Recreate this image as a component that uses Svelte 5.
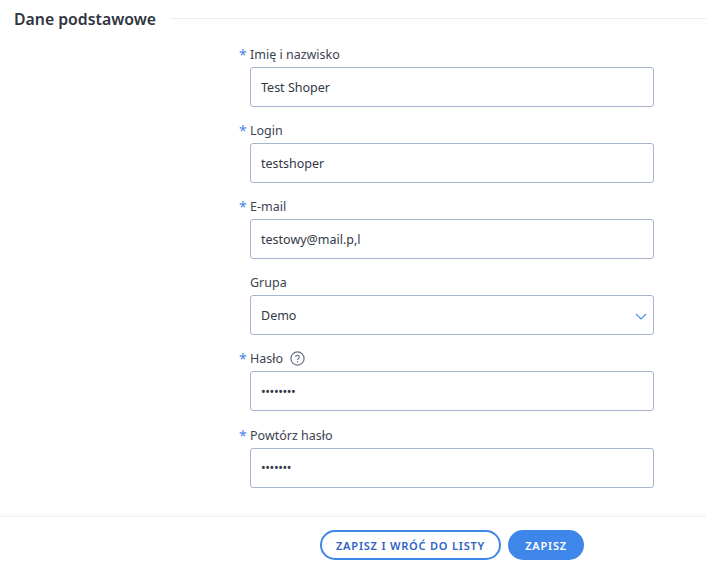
<script>
  const fields = [
    { id: 'name', label: 'Imię i nazwisko', value: 'Test Shoper', type: 'text', required: true },
    { id: 'login', label: 'Login', value: 'testshoper', type: 'text', required: true },
    { id: 'email', label: 'E-mail', value: 'testowy@mail.p,l', type: 'text', required: true },
    { id: 'group', label: 'Grupa', value: 'Demo', type: 'select' },
    { id: 'pass', label: 'Hasło', value: '........', type: 'password', required: true, help: true },
    { id: 'pass2', label: 'Powtórz hasło', value: '.......', type: 'password', required: true }
  ];
</script>

<div class="page">
  <main class="content">
    <div class="section-title">
      <h2>Dane podstawowe</h2>
      <span class="rule"></span>
    </div>

    <form class="fields">
      {#each fields as field}
        <div class="field">
          <label for={field.id}>
            {#if field.required}<span class="star">*</span>{/if}
            {field.label}
            {#if field.help}
              <svg class="help" width="15" height="15" viewBox="0 0 15 15" fill="none">
                <circle cx="7.5" cy="7.5" r="6.6" stroke="#6a7185" stroke-width="1.2" />
                <path d="M5.7 6a1.8 1.8 0 1 1 2.8 1.5c-.6.4-1 .7-1 1.4" stroke="#6a7185" stroke-width="1.1" />
                <circle cx="7.5" cy="10.7" r=".7" fill="#6a7185" />
              </svg>
            {/if}
          </label>
          {#if field.type === 'select'}
            <div class="select-wrap">
              <select id={field.id}>
                <option>{field.value}</option>
              </select>
              <svg class="chevron" width="12" height="7" viewBox="0 0 12 7" fill="none">
                <path d="M1 1l5 5 5-5" stroke="#4a8af0" stroke-width="1.1" />
              </svg>
            </div>
          {:else}
            <input id={field.id} class:secret={field.type === 'password'} type={field.type} value={field.value} />
          {/if}
        </div>
      {/each}
    </form>
  </main>

  <footer class="actions">
    <button class="btn outline" type="button">Zapisz i wróć do listy</button>
    <button class="btn solid" type="button">Zapisz</button>
  </footer>
</div>

<style>
  :global(body) {
    margin: 0;
    background: #fff;
    font-family: "Noto Sans", "Open Sans", sans-serif;
  }

  .page {
    width: 706px;
    height: 569px;
    overflow: hidden;
    display: flex;
    flex-direction: column;
  }

  .content { flex: 1; }

  .section-title {
    display: flex;
    align-items: center;
    gap: 14px;
    padding: 8px 0 0 14px;
    height: 21px;
  }

  h2 {
    margin: 0;
    font-size: 15.8px;
    font-weight: 600;
    color: #2f3441;
    white-space: nowrap;
  }

  .rule {
    flex: 1;
    height: 1px;
    background: #ececef;
    margin-top: -1px;
  }

  .fields {
    display: flex;
    flex-direction: column;
    padding: 14px 0 0 250px;
    width: 404px;
  }

  .field {
    height: 76.12px;
    display: flex;
    flex-direction: column;
  }

  label {
    position: relative;
    height: 24px;
    font-size: 12.5px;
    line-height: 24px;
    color: #3d4250;
    display: flex;
    align-items: flex-start;
    gap: 7px;
  }

  .star {
    position: absolute;
    left: -11px;
    top: 0;
    color: #4a86e8;
    font-size: 14px;
  }

  .help { margin-top: 4px; }

  input, select {
    box-sizing: border-box;
    width: 404px;
    height: 40px;
    padding: 0 10px;
    border: 1px solid #a9b4d2;
    border-radius: 3px;
    background: #fff;
    font-family: inherit;
    font-size: 12.5px;
    color: #333846;
    outline: none;
    appearance: none;
  }

  .secret { letter-spacing: -0.4px; }

  .select-wrap { position: relative; }

  .chevron {
    position: absolute;
    right: 7px;
    top: 18px;
  }

  .actions {
    box-sizing: border-box;
    height: 53px;
    border-top: 1px solid #f0f0f2;
    box-shadow: 0 -3px 5px rgba(0, 0, 0, 0.025);
    display: flex;
    gap: 7px;
    padding: 13px 0 0 320px;
  }

  .btn {
    height: 30px;
    border-radius: 15px;
    box-sizing: border-box;
    font-family: inherit;
    font-size: 11px;
    font-weight: 600;
    letter-spacing: 0.8px;
    text-transform: uppercase;
    white-space: nowrap;
  }

  .outline {
    width: 181px;
    padding: 0;
    background: #fff;
    border: 2px solid #3f86ea;
    color: #2e62c4;
  }

  .solid {
    width: 76px;
    padding: 0;
    background: #3f86ea;
    border: none;
    color: #fff;
  }
</style>
